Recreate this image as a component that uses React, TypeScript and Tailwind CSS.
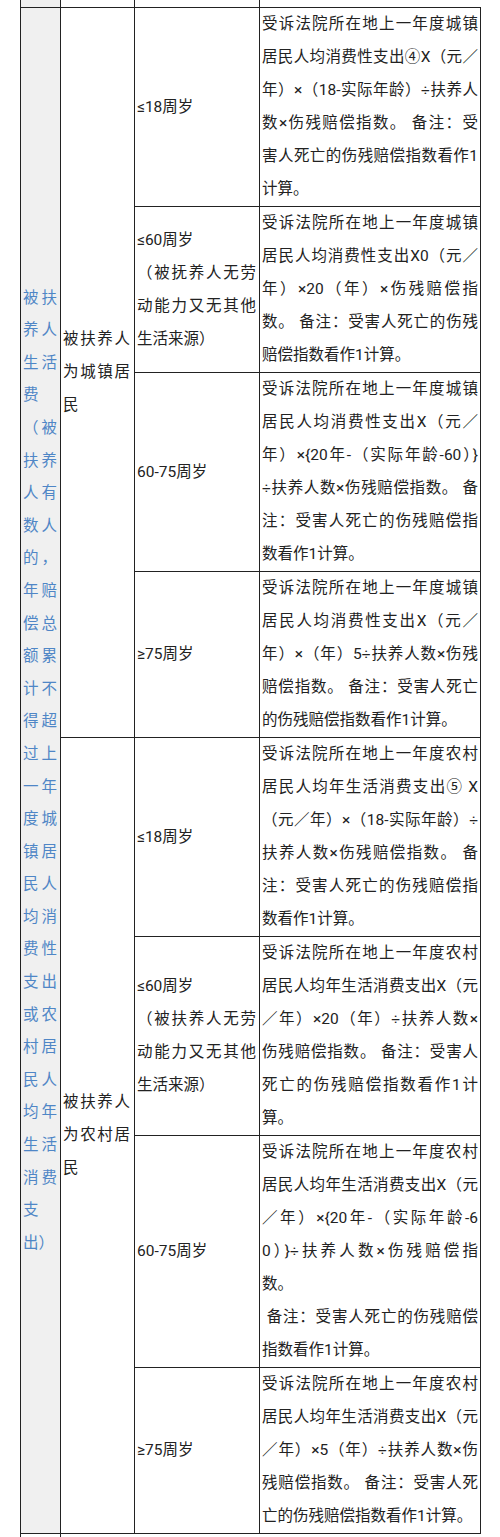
import React from "react";

type Cell = { lines: string[]; plain?: number[] };

const Lines = ({ lines, plain = [] }: Cell) => (
  <div className="w-full">
    {lines.map((t, i) => {
      const justify = i !== lines.length - 1 && !plain.includes(i);
      return (
        <div
          key={i}
          className={
            justify
              ? "whitespace-pre text-justify [text-align-last:justify]"
              : "whitespace-pre"
          }
        >
          {t}
        </div>
      );
    })}
  </div>
);

const col1: string[] = [
  "被扶", "养人", "生活", "费", "（被", "扶养", "人有", "数人", "的，", "年赔",
  "偿总", "额累", "计不", "得超", "过上", "一年", "度城", "镇居", "民人", "均消",
  "费性", "支出", "或农", "村居", "民人", "均年", "生活", "消费", "支", "出）",
];

type Row = { age: Cell; desc: Cell };

const urbanRows: Row[] = [
  {
    age: { lines: ["≤18周岁"] },
    desc: {
      lines: [
        "受诉法院所在地上一年度城镇",
        "居民人均消费性支出④X（元／",
        "年）×（18-实际年龄）÷扶养人",
        "数×伤残赔偿指数。 备注：受",
        "害人死亡的伤残赔偿指数看作1",
        "计算。",
      ],
    },
  },
  {
    age: {
      lines: ["≤60周岁", "（被抚养人无劳", "动能力又无其他", "生活来源）"],
      plain: [0],
    },
    desc: {
      lines: [
        "受诉法院所在地上一年度城镇",
        "居民人均消费性支出X0（元／",
        "年）×20（年）×伤残赔偿指",
        "数。 备注：受害人死亡的伤残",
        "赔偿指数看作1计算。",
      ],
    },
  },
  {
    age: { lines: ["60-75周岁"] },
    desc: {
      lines: [
        "受诉法院所在地上一年度城镇",
        "居民人均消费性支出X（元／",
        "年）×{20年-（实际年龄-60）}",
        "÷扶养人数×伤残赔偿指数。 备",
        "注：受害人死亡的伤残赔偿指",
        "数看作1计算。",
      ],
    },
  },
  {
    age: { lines: ["≥75周岁"] },
    desc: {
      lines: [
        "受诉法院所在地上一年度城镇",
        "居民人均消费性支出X（元／",
        "年）×（年）5÷扶养人数×伤残",
        "赔偿指数。 备注：受害人死亡",
        "的伤残赔偿指数看作1计算。",
      ],
    },
  },
];

const ruralRows: Row[] = [
  {
    age: { lines: ["≤18周岁"] },
    desc: {
      lines: [
        "受诉法院所在地上一年度农村",
        "居民人均年生活消费支出⑤ X",
        "（元／年）×（18-实际年龄）÷",
        "扶养人数×伤残赔偿指数。 备",
        "注：受害人死亡的伤残赔偿指",
        "数看作1计算。",
      ],
    },
  },
  {
    age: {
      lines: ["≤60周岁", "（被扶养人无劳", "动能力又无其他", "生活来源）"],
      plain: [0],
    },
    desc: {
      lines: [
        "受诉法院所在地上一年度农村",
        "居民人均年生活消费支出X（元",
        "／年）×20（年）÷扶养人数×",
        "伤残赔偿指数。 备注：受害人",
        "死亡的伤残赔偿指数看作1计",
        "算。",
      ],
    },
  },
  {
    age: { lines: ["60-75周岁"] },
    desc: {
      lines: [
        "受诉法院所在地上一年度农村",
        "居民人均年生活消费支出X（元",
        "／年）×{20年-（实际年龄-6",
        "0）}÷扶养人数×伤残赔偿指",
        "数。",
        "\u00a0备注：受害人死亡的伤残赔偿",
        "指数看作1计算。",
      ],
      plain: [4],
    },
  },
  {
    age: { lines: ["≥75周岁"] },
    desc: {
      lines: [
        "受诉法院所在地上一年度农村",
        "居民人均年生活消费支出X（元",
        "／年）×5（年）÷扶养人数×伤",
        "残赔偿指数。 备注：受害人死",
        "亡的伤残赔偿指数看作1计算。",
      ],
    },
  },
];

const RowCells = ({ row }: { row: Row }) => (
  <>
    <div className="col-start-3 flex items-center border-r border-b border-[#222] pl-[2px] pr-[3px]">
      <Lines {...row.age} />
    </div>
    <div className="col-start-4 flex items-center border-r border-b border-[#222] pl-[2px] pr-[2px]">
      <Lines {...row.desc} />
    </div>
  </>
);

export default function App() {
  return (
    <div className="w-[500px] min-h-[1537px] overflow-hidden bg-white pl-[20px] font-['Roboto','Noto_Sans_CJK_SC',sans-serif] text-[15.5px] leading-[33px] text-[#222]">
      {/* continuation of previous row */}
      <div className="flex h-[7px]">
        <div className="w-[41px] border-x border-[#222] bg-[#f0f0f0]" />
        <div className="w-[74px] border-r border-[#222]" />
        <div className="w-[125px] border-r border-[#222]" />
      </div>

      <div className="grid w-[461px] grid-cols-[40px_74px_125px_221px] border-l border-t border-[#222]">
        <div className="col-start-1 row-span-8 row-start-1 flex items-center border-r border-b border-[#222] bg-[#f0f0f0] pl-[2px] pr-[3px] text-[#4f86c6] leading-[32.6px]">
          <Lines lines={col1} plain={[3, 28]} />
        </div>
        <div className="col-start-2 row-span-4 row-start-1 flex items-center border-r border-b border-[#222] pl-[2px] pr-[4px]">
          <Lines lines={["被扶养人", "为城镇居", "民"]} />
        </div>
        {urbanRows.map((r, i) => (
          <RowCells key={`u${i}`} row={r} />
        ))}
        <div className="col-start-2 row-span-4 row-start-5 flex items-center border-r border-b border-[#222] pl-[2px] pr-[4px]">
          <Lines lines={["被扶养人", "为农村居", "民"]} />
        </div>
        {ruralRows.map((r, i) => (
          <RowCells key={`r${i}`} row={r} />
        ))}
      </div>

      {/* start of next row */}
      <div className="flex h-[6px]">
        <div className="w-[41px] border-x border-[#222]" />
      </div>
    </div>
  );
}
